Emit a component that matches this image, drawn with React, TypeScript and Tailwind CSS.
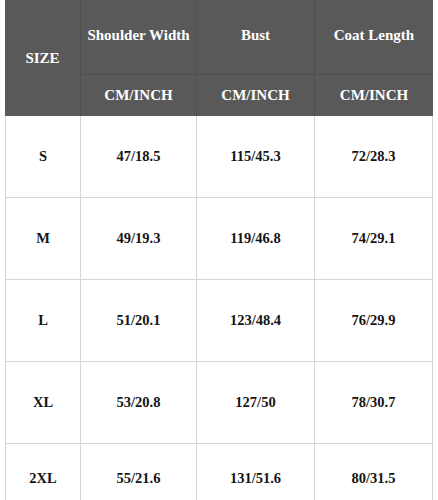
const rows = [
	{ size: "S", shoulder: "47/18.5", bust: "115/45.3", coat: "72/28.3" },
	{ size: "M", shoulder: "49/19.3", bust: "119/46.8", coat: "74/29.1" },
	{ size: "L", shoulder: "51/20.1", bust: "123/48.4", coat: "76/29.9" },
	{ size: "XL", shoulder: "53/20.8", bust: "127/50", coat: "78/30.7" },
	{ size: "2XL", shoulder: "55/21.6", bust: "131/51.6", coat: "80/31.5" },
];

const App = () => {
	return (
		<div className="bg-white h-[500px] overflow-hidden pl-[5px]">
			<div className="w-[428px] font-['Liberation_Serif','Times_New_Roman',serif] font-bold text-[15px]">
				{/* header */}
				<div className="grid grid-cols-[76px_116px_118px_118px] grid-rows-[75px_41px] bg-[#595959] text-white">
					<div className="row-span-2 flex items-center justify-center border-r border-[#4f4f4f]">SIZE</div>
					<div className="flex items-center justify-center pb-[4px] border-r border-b border-[#4f4f4f]">Shoulder Width</div>
					<div className="flex items-center justify-center pb-[4px] border-r border-b border-[#4f4f4f]">Bust</div>
					<div className="flex items-center justify-center pb-[4px] border-b border-[#4f4f4f]">Coat Length</div>
					<div className="flex items-center justify-center border-r border-[#4f4f4f]">CM/INCH</div>
					<div className="flex items-center justify-center border-r border-[#4f4f4f]">CM/INCH</div>
					<div className="flex items-center justify-center">CM/INCH</div>
				</div>

				{/* body */}
				{rows.map((r, i) => (
					<div
						key={r.size}
						className={
							i === rows.length - 1
								? "grid grid-cols-[76px_116px_118px_118px] h-[70px] text-[#151515] text-[14.5px]"
								: "grid grid-cols-[76px_116px_118px_118px] h-[82px] border-b border-[#d6d6d6] text-[#151515] text-[14.5px]"
						}
					>
						<div className="flex items-center justify-center border-l border-r border-[#d6d6d6]">{r.size}</div>
						<div className="flex items-center justify-center border-r border-[#d6d6d6]">{r.shoulder}</div>
						<div className="flex items-center justify-center border-r border-[#d6d6d6]">{r.bust}</div>
						<div className="flex items-center justify-center border-r border-[#d6d6d6]">{r.coat}</div>
					</div>
				))}
			</div>
		</div>
	);
};

export default App;
